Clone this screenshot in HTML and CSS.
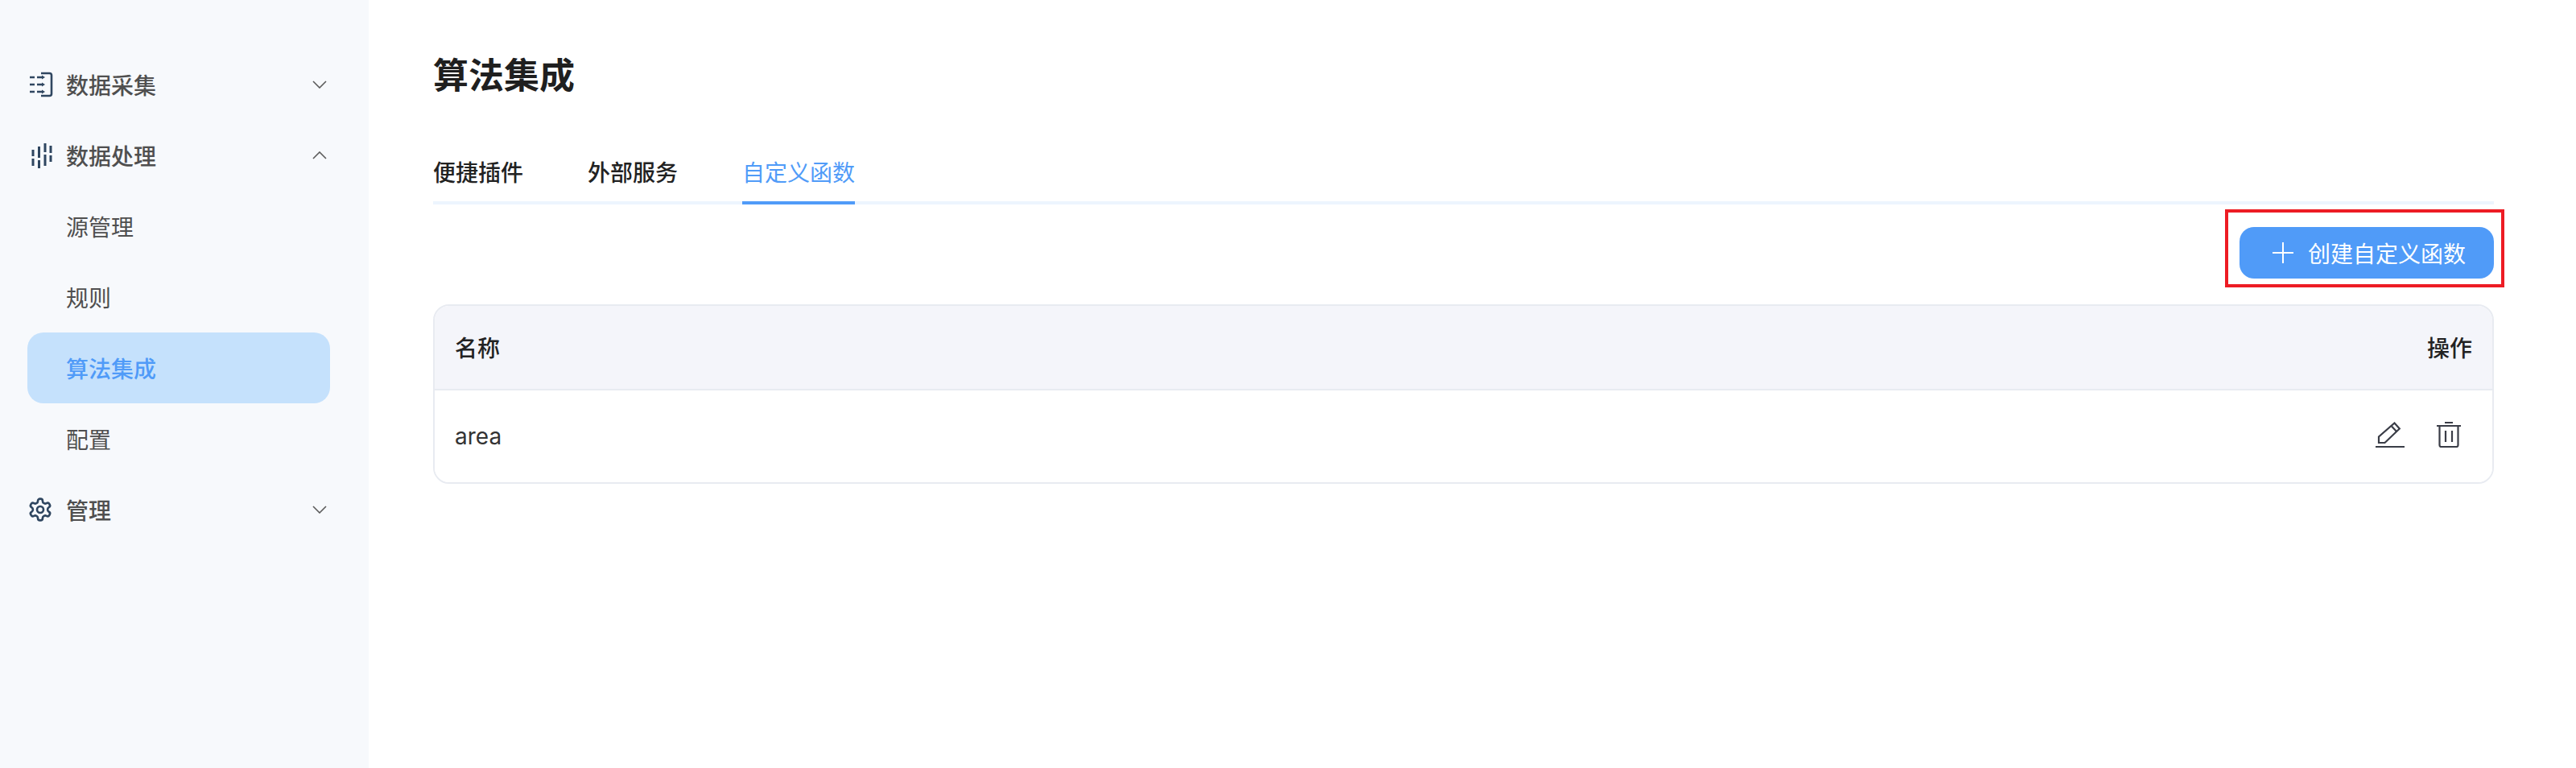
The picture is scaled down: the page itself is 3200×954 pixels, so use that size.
FILE: index.html
```html
<!DOCTYPE html>
<html lang="zh">
<head>
<meta charset="utf-8">
<title>算法集成</title>
<link rel="stylesheet" href="styles.css">
</head>
<body>
<div class="app">
  <aside class="sidebar">
    <nav class="nav">
      <div class="nav-item group">
        <svg class="nav-icon" viewBox="0 0 30 32" fill="none" stroke="#2f4660" stroke-width="2.6">
          <path d="M15 2h10.5a2.5 2.5 0 0 1 2.5 2.5v23a2.5 2.5 0 0 1-2.5 2.5H15"/>
          <path d="M1 7h6M10 7h6M1 16h6M10 16h6M1 25h6M10 25h6"/>
          <path d="M16 4.5l4 2.5-4 2.5zM16 13.500l4 2.500-4 2.500zM16 22.500l4 2.500-4 2.500z" fill="#2f4660" stroke="none"/>
        </svg>
        <span class="nav-label">数据采集</span>
        <svg class="chevron" viewBox="0 0 18 10" fill="none" stroke="#5a5a5a" stroke-width="1.6"><path d="M1 1l8 8 8-8"/></svg>
      </div>
      <div class="nav-item group">
        <svg class="nav-icon" viewBox="0 0 30 32" fill="none" stroke="#2f4660" stroke-width="3">
          <path d="M5 9v8M5 20v9M12.500 5v14M12.500 22v10M20 1v11M20 15v14M27 4v9M27 16v8"/>
        </svg>
        <span class="nav-label">数据处理</span>
        <svg class="chevron" viewBox="0 0 18 10" fill="none" stroke="#5a5a5a" stroke-width="1.6"><path d="M1 9l8-8 8 8"/></svg>
      </div>
      <div class="nav-item sub">源管理</div>
      <div class="nav-item sub">规则</div>
      <div class="nav-item sub active">算法集成</div>
      <div class="nav-item sub">配置</div>
      <div class="nav-item group">
        <svg class="nav-icon gear" viewBox="0 0 24 24" fill="none" stroke="#2f4660" stroke-width="2">
          <path d="M12.220 2h-.44a2 2 0 0 0-2 2v.18a2 2 0 0 1-1 1.730l-.43.25a2 2 0 0 1-2 0l-.15-.08a2 2 0 0 0-2.730.73l-.22.38a2 2 0 0 0 .73 2.730l.15.1a2 2 0 0 1 1 1.720v.51a2 2 0 0 1-1 1.740l-.15.09a2 2 0 0 0-.73 2.730l.22.38a2 2 0 0 0 2.730.73l.15-.08a2 2 0 0 1 2 0l.43.25a2 2 0 0 1 1 1.730V20a2 2 0 0 0 2 2h.44a2 2 0 0 0 2-2v-.18a2 2 0 0 1 1-1.730l.43-.25a2 2 0 0 1 2 0l.15.08a2 2 0 0 0 2.730-.73l.22-.39a2 2 0 0 0-.73-2.730l-.15-.08a2 2 0 0 1-1-1.740v-.5a2 2 0 0 1 1-1.740l.15-.09a2 2 0 0 0 .73-2.730l-.22-.38a2 2 0 0 0-2.730-.73l-.15.08a2 2 0 0 1-2 0l-.43-.25a2 2 0 0 1-1-1.730V4a2 2 0 0 0-2-2z"/>
          <circle cx="12" cy="12" r="3"/>
        </svg>
        <span class="nav-label">管理</span>
        <svg class="chevron" viewBox="0 0 18 10" fill="none" stroke="#5a5a5a" stroke-width="1.6"><path d="M1 1l8 8 8-8"/></svg>
      </div>
    </nav>
  </aside>
  <main class="main">
    <h1 class="title">算法集成</h1>
    <div class="tabs">
      <div class="tab">便捷插件</div>
      <div class="tab">外部服务</div>
      <div class="tab current">自定义函数</div>
    </div>
    <div class="toolbar">
      <div class="btn-wrap">
        <button class="btn" type="button">
          <svg class="plus" viewBox="0 0 26 26" fill="none" stroke="#fff" stroke-width="2"><path d="M13 0v26M0 13h26"/></svg>
          <span>创建自定义函数</span>
        </button>
        <div class="highlight"></div>
      </div>
    </div>
    <div class="table">
      <div class="row head">
        <div class="cell">名称</div>
        <div class="cell">操作</div>
      </div>
      <div class="row body">
        <div class="cell latin">area</div>
        <div class="actions">
          <svg class="icon-edit" viewBox="0 0 36 32" fill="none" stroke="#3a3d47" stroke-width="2.2">
            <path d="M4 18.500V26h7.500L29.800 8.500 23.500 1.500z"/>
            <path d="M20 5.500l6.500 7"/>
            <path d="M0 31h36"/>
          </svg>
          <svg class="icon-trash" viewBox="0 0 30 32" fill="none" stroke="#3a3d47" stroke-width="2.2">
            <path d="M10 1h10M0 5h30"/>
            <path d="M3.500 5v24a2 2 0 0 0 2 2h19a2 2 0 0 0 2-2V5"/>
            <path d="M11 11v14M19 11v14"/>
          </svg>
        </div>
      </div>
    </div>
  </main>
</div>
</body>
</html>
```

FILE: styles.css
```css
* { box-sizing: border-box; }
html, body { margin: 0; padding: 0; background: #fff; }
body {
  font-family: Inter, "Noto Sans CJK SC", sans-serif;
  font-size: 28px;
  color: #222;
}
.app { display: flex; min-height: 954px; }
.sidebar { width: 458px; flex: none; background: #f7f9fc; padding: 61px 48px 0 34px; }
.nav { display: flex; flex-direction: column; }
.nav-item {
  height: 88px;
  display: flex;
  align-items: center;
  font-size: 28px;
  color: #4f4f4f;
  border-radius: 20px;
}
.group { font-weight: 500; padding-right: 3px; }
.sub { padding-left: 48px; font-weight: 400; }
.active { background: #c5e1fc; color: #509bf8; font-weight: 500; }
.nav-icon { width: 30px; height: 32px; flex: none; margin-left: 2px; margin-right: 16px; }
.gear { width: 32px; height: 32px; margin-left: 0; }
.nav-label { flex: 1; }
.chevron { width: 18px; height: 10px; flex: none; margin-right: 1px; }
.main { flex: 1; min-width: 0; padding: 0 102px 0 80px; }
.title { margin: 0; padding-top: 62px; height: 176px; font-size: 44px; line-height: 64px; font-weight: 600; color: #1f1f1f; }
.tabs { display: flex; gap: 80px; height: 78px; border-bottom: 4px solid #edf5fe; }
.tab { height: 78px; line-height: 78px; border-bottom: 4px solid transparent; color: #222; font-weight: 500; }
.tab.current { color: #509bf8; border-bottom-color: #509bf8; font-weight: 400; }
.toolbar { display: flex; justify-content: flex-end; padding-top: 28px; height: 124px; }
.btn-wrap { position: relative; height: 64px; }
.btn {
  display: flex;
  align-items: center;
  width: 316px;
  height: 64px;
  padding: 0 0 0 41px;
  gap: 18px;
  border: 0;
  border-radius: 18px;
  background: #509bf8;
  color: #fff;
  font: inherit;
  font-size: 28px;
}
.plus { width: 26px; height: 26px; flex: none; }
.highlight { position: absolute; left: -18px; right: -13px; top: -22px; bottom: -11px; border: 4px solid #ed1c24; pointer-events: none; }
.table { border: 2px solid #e8ebf1; border-radius: 20px; overflow: hidden; }
.row { display: flex; justify-content: space-between; align-items: center; padding: 0 25px; }
.head { height: 105px; background: #f4f5fa; border-bottom: 2px solid #e8ebf1; font-weight: 500; color: #222; }
.head .cell { margin-top: -2px; }
.body { height: 114px; background: #fff; }
.latin { color: #333; font-size: 28px; }
.actions { display: flex; align-items: center; gap: 40px; margin-right: 14px; margin-top: -4px; }
.icon-edit { width: 36px; height: 32px; }
.icon-trash { width: 30px; height: 32px; }
```
